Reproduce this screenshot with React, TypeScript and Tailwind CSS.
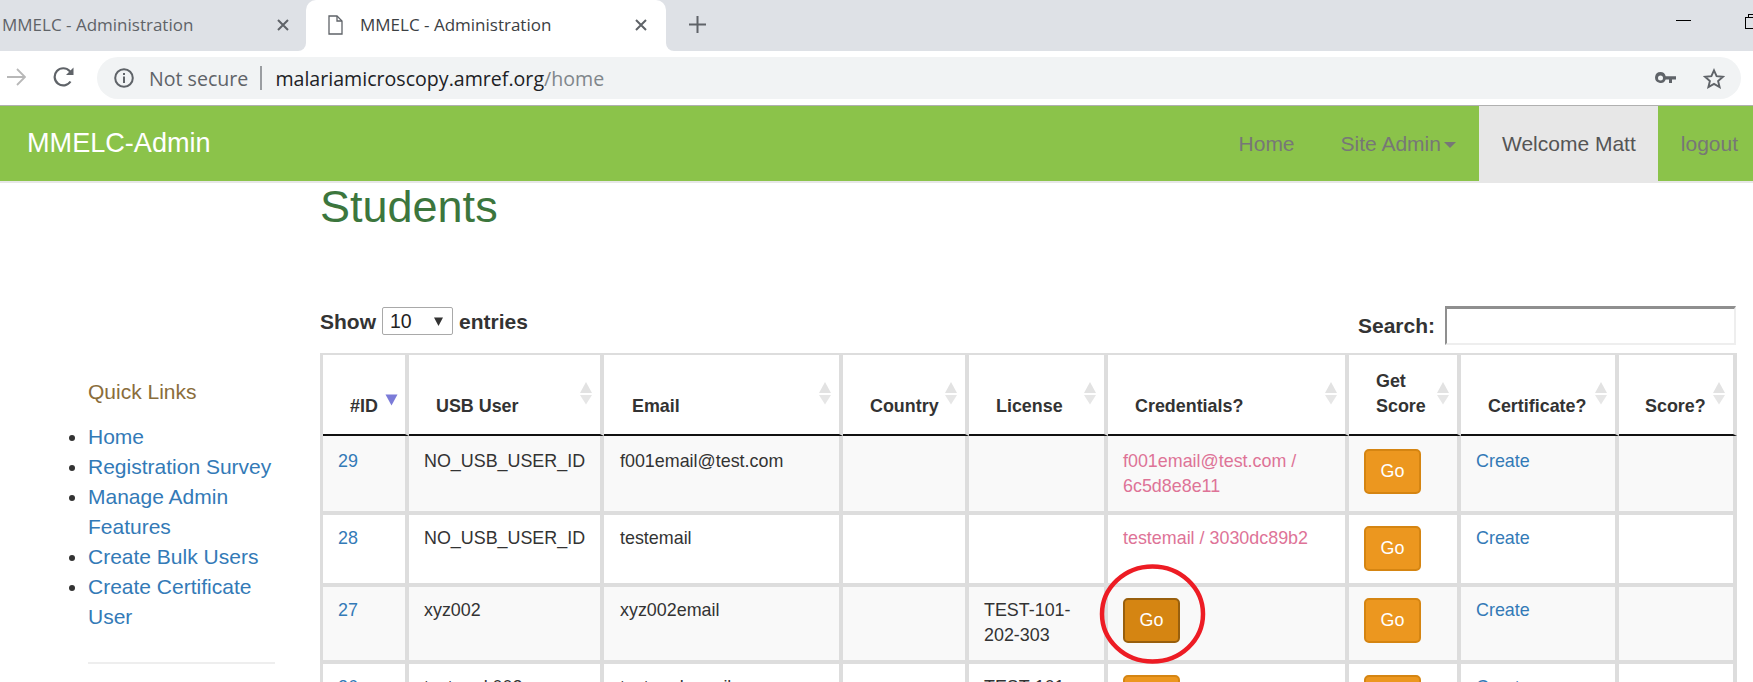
import React from 'react';

const columns = [
  { key: 'id', label: <>#ID</>, width: 'w-[86px]', pad: 'pl-[27px]' },
  { key: 'usb', label: <>USB User</>, width: 'w-[195px]', pad: 'pl-[27px]' },
  { key: 'email', label: <>Email</>, width: 'w-[239px]', pad: 'pl-[28px]' },
  { key: 'country', label: <>Country</>, width: 'w-[126px]', pad: 'pl-[27px]' },
  { key: 'license', label: <>License</>, width: 'w-[139px]', pad: 'pl-[27px]' },
  { key: 'cred', label: <>Credentials?</>, width: 'w-[241px]', pad: 'pl-[27px]' },
  { key: 'score', label: <>Get<br />Score</>, width: 'w-[112px]', pad: 'pl-[27px]' },
  { key: 'cert', label: <>Certificate?</>, width: 'w-[158px]', pad: 'pl-[27px]' },
  { key: 'total', label: <>Score?</>, width: 'w-[118px]', pad: 'pl-[26px]' },
];

type Row = {
  id: number;
  usb: string;
  email: string;
  license?: string;
  cred?: string;
  pressed?: boolean;
  goCred?: boolean;
  striped: boolean;
  cell: string;
};

const rows: Row[] = [
  { id: 29, usb: 'NO_USB_USER_ID', email: 'f001email@test.com', cred: 'f001email@test.com / 6c5d8e8e11', striped: true, cell: 'h-[79px] pt-[13px]' },
  { id: 28, usb: 'NO_USB_USER_ID', email: 'testemail', cred: 'testemail / 3030dc89b2', striped: false, cell: 'h-[72px] pt-[11px]' },
  { id: 27, usb: 'xyz002', email: 'xyz002email', license: 'TEST-101-202-303', goCred: true, pressed: true, striped: true, cell: 'h-[77px] pt-[11px]' },
  { id: 26, usb: 'testmark002', email: 'testmarkemail', license: 'TEST-101-202-304', goCred: true, striped: false, cell: 'h-[80px] pt-[11px]' },
];

const links = ['Home', 'Registration Survey', 'Manage Admin Features', 'Create Bulk Users', 'Create Certificate User'];

const SortIcon = ({ active }: { active?: boolean }) =>
  active ? (
    <svg className="absolute right-[7px] top-[39px]" width="13" height="12" viewBox="0 0 13 12">
      <path d="M0.5 0.5H12.5L6.5 11.5Z" fill="#7b7bd8" />
    </svg>
  ) : (
    <svg className="absolute right-[8px] top-[27px]" width="12" height="23" viewBox="0 0 12 23">
      <path d="M6 0L12 11H0Z" fill="#e2e2e2" />
      <path d="M0 13H12L6 22.5Z" fill="#e6e6e6" />
    </svg>
  );

const GoButton = ({ pressed }: { pressed?: boolean }) => (
  <button
    className={`flex h-[45px] w-[57px] items-center justify-center rounded-[5px] border-2 text-white ${
      pressed ? 'border-[#985f0d] bg-[#d58512]' : 'border-[#d58512] bg-[#ec971f]'
    }`}
  >
    Go
  </button>
);

const CloseIcon = () => (
  <svg width="12" height="12" viewBox="0 0 12 12" fill="none" stroke="#5f6368" strokeWidth="2">
    <path d="M1 1L11 11M11 1L1 11" />
  </svg>
);

const TabStrip = () => (
  <div className="flex h-[51px] items-center bg-[#dee1e6] font-['Open_Sans',sans-serif] text-[17px]">
    <div className="flex h-full w-[306px] items-center justify-between pb-[2px] pl-[2px] pr-[17px] text-[#5f6368]">
      <span>MMELC - Administration</span>
      <CloseIcon />
    </div>
    <div className="relative flex h-full w-[360px] items-center rounded-t-[10px] bg-white pb-[2px] pl-[22px] pr-[19px] text-[#3c4043]">
      <span className="absolute bottom-0 left-[-8px] h-2 w-2 bg-white">
        <span className="block h-2 w-2 rounded-br-[8px] bg-[#dee1e6]" />
      </span>
      <span className="absolute bottom-0 right-[-8px] h-2 w-2 bg-white">
        <span className="block h-2 w-2 rounded-bl-[8px] bg-[#dee1e6]" />
      </span>
      <svg width="15" height="20" viewBox="0 0 15 20" fill="none" stroke="#5f6368" strokeWidth="1.3">
        <path d="M1 1H9L14 6V19H1Z" />
        <path d="M9 1V6H14" />
      </svg>
      <span className="ml-[17px] flex-1">MMELC - Administration</span>
      <CloseIcon />
    </div>
    <svg className="ml-[23px] mb-[2px]" width="17" height="17" viewBox="0 0 17 17" stroke="#5f6368" strokeWidth="2">
      <path d="M8.5 0V17M0 8.5H17" />
    </svg>
    <div className="ml-auto flex h-full items-start">
      <span className="mt-[20px] h-px w-[15px] bg-black" />
      <span className="relative ml-[54px] mt-[17px] h-[12px] w-[8px] border-y border-l border-black">
        <span className="absolute left-[2px] top-[-4px] h-[3px] w-[6px] border-l border-t border-black" />
      </span>
    </div>
  </div>
);

const Toolbar = () => (
  <div className="flex h-[55px] items-start border-b border-[#b0b0b0] bg-white pt-[6px] font-['Open_Sans',sans-serif]">
    <svg className="ml-[7px] mt-[11px]" width="19" height="18" viewBox="0 0 19 18" fill="none" stroke="#b8b8b8" strokeWidth="1.8">
      <path d="M0 9H18M10 1L18 9L10 17" />
    </svg>
    <svg className="ml-[27px] mt-[10px]" width="22" height="20" viewBox="0 0 22 20" fill="none" stroke="#5f6368" strokeWidth="2.2">
      <path d="M17.5 14.5A8.6 8.6 0 1 1 16.6 4L19 6.6" />
      <path d="M20.5 0.5V8H13Z" fill="#5f6368" stroke="none" />
    </svg>
    <div className="ml-[22px] flex h-[42px] w-[1644px] items-center rounded-full bg-[#f1f3f4] pl-[17px] pr-[16px]">
      <svg width="20" height="20" viewBox="0 0 20 20" fill="none" stroke="#5f6368" strokeWidth="2">
        <circle cx="10" cy="10" r="8.8" />
        <path d="M10 8.5V15M10 5V7" />
      </svg>
      <span className="ml-[15px] pt-[2px] text-[19.6px] text-[#5f6368]">Not secure</span>
      <span className="ml-[12px] h-[24px] w-[2px] bg-[#9a9da1]" />
      <span className="ml-[13px] pt-[2px] text-[19.6px] text-[#202124]">
        malariamicroscopy.amref.org<span className="text-[#80868b]">/home</span>
      </span>
      <svg className="ml-auto" width="21" height="12" viewBox="0 0 21 12" fill="#5f6368">
        <path d="M5.5 0A5.5 5.5 0 1 0 10.7 7.5H14V11H17V7.5H21V4.2H10.7A5.5 5.5 0 0 0 5.5 0ZM5.5 3.4A2.4 2.4 0 1 1 5.5 8.4A2.4 2.4 0 0 1 5.5 3.4Z" />
      </svg>
      <svg className="ml-[27px]" width="22" height="21" viewBox="0 0 22 21" fill="none" stroke="#5f6368" strokeWidth="1.9">
        <path d="M11 2.4L13.6 8.2L19.9 8.8L15.1 13L16.6 19.1L11 15.9L5.4 19.1L6.9 13L2.1 8.8L8.4 8.2Z" />
      </svg>
    </div>
  </div>
);

const Navbar = () => (
  <div className="flex h-[77px] items-stretch border-b-2 border-[#e7e7e7] bg-[#8bc34a] text-[21px] text-[#777777]">
    <a className="ml-[27px] flex items-center text-[27.1px] text-white">MMELC-Admin</a>
    <div className="ml-auto flex items-stretch">
      <a className="flex items-center px-[23px]">Home</a>
      <a className="flex items-center px-[23px]">
        Site Admin
        <span className="ml-[3px] mt-[2px] h-0 w-0 border-x-[6px] border-t-[6px] border-x-transparent border-t-[#777777]" />
      </a>
      <a className="flex items-center bg-[#e7e7e7] pl-[23px] pr-[22px] text-[#555555]">Welcome Matt</a>
      <a className="flex items-center pl-[23px] pr-[15px]">logout</a>
    </div>
  </div>
);

const Sidebar = () => (
  <div className="w-[320px] shrink-0 pl-[88px] pr-[45px] pt-[194px] text-[21px] leading-[30px]">
    <h4 className="text-[#8a6d3b]">Quick Links</h4>
    <ul className="mt-[15px] list-disc text-[#333333]">
      {links.map((l) => (
        <li key={l} className="text-[#337ab7] marker:text-[#333333]">
          <a>{l}</a>
        </li>
      ))}
    </ul>
    <hr className="mt-[30px] border-t-2 border-[#eeeeee]" />
  </div>
);

const StudentsTable = () => (
  <table className="relative table-fixed border-separate border-spacing-0 border-l-[3px] border-t-[2px] border-[#dddddd]">
    <thead>
      <tr>
        {columns.map((c) => (
          <th
            key={c.key}
            className={`relative h-[81px] border-b-2 border-r-4 border-b-[#111111] border-r-[#dddddd] pb-[15px] text-left align-bottom font-bold whitespace-nowrap ${c.pad} ${c.width}`}
          >
            {c.label}
            <SortIcon active={c.key === 'id'} />
          </th>
        ))}
      </tr>
    </thead>
    <tbody>
      {rows.map((r) => {
        const td = `border-b-4 border-r-4 border-[#dddddd] align-top ${r.cell} ${r.striped ? 'bg-[#f9f9f9]' : 'bg-white'}`;
        return (
          <tr key={r.id}>
            <td className={`${td} pl-[15px] text-[#337ab7]`}><a>{r.id}</a></td>
            <td className={`${td} pl-[15px]`}>{r.usb}</td>
            <td className={`${td} pl-[16px]`}>{r.email}</td>
            <td className={td} />
            <td className={`${td} pl-[15px]`}>{r.license}</td>
            <td className={`${td} pl-[15px] pr-[10px] text-[#de7397]`}>
              {r.goCred ? <GoButton pressed={r.pressed} /> : r.cred}
            </td>
            <td className={`${td} pl-[15px]`}><GoButton /></td>
            <td className={`${td} pl-[15px] text-[#337ab7]`}><a>Create</a></td>
            <td className={td} />
          </tr>
        );
      })}
    </tbody>
  </table>
);

const Content = () => (
  <div className="relative w-[1417px] text-[17.9px] leading-[25px] text-[#333333]">
    <h1 className="h-[44px] text-[45px] leading-[48px] text-[#3c763d]">Students</h1>
    <div className="mt-[79px] flex h-[39px] items-start justify-between text-[21px]">
      <div className="mt-px flex h-[28px] items-center font-bold">
        <span>Show</span>
        <div className="ml-[6px] flex h-[28px] w-[71px] items-center justify-between rounded-[2px] border border-[#a9a9a9] pl-[7px] pr-[9px] text-[19.5px] font-normal text-[#222222]">
          10
          <svg width="9" height="9" viewBox="0 0 9 9"><path d="M0 0.5H9L4.5 9Z" fill="#333333" /></svg>
        </div>
        <span className="ml-[6px]">entries</span>
      </div>
      <div className="mr-px flex h-[39px] items-center font-bold">
        <span>Search:</span>
        <div className="ml-[10px] h-[39px] w-[291px] border-2 border-b-[#eeeeee] border-l-[#8f8f8f] border-r-[#eeeeee] border-t-[3px] border-t-[#8f8f8f]" />
      </div>
    </div>
    <div className="mt-[8px]">
      <StudentsTable />
    </div>
    <svg className="absolute left-[779px] top-[381px]" width="107" height="100" viewBox="0 0 107 100" fill="none">
      <ellipse cx="53.5" cy="50" rx="50.5" ry="47.5" stroke="#ed1c24" strokeWidth="4.5" />
    </svg>
  </div>
);

export default function App() {
  return (
    <div className="h-[682px] w-[1753px] overflow-hidden bg-white font-['Liberation_Sans',Arial,sans-serif]">
      <TabStrip />
      <Toolbar />
      <Navbar />
      <div className="flex">
        <Sidebar />
        <Content />
      </div>
    </div>
  );
}
